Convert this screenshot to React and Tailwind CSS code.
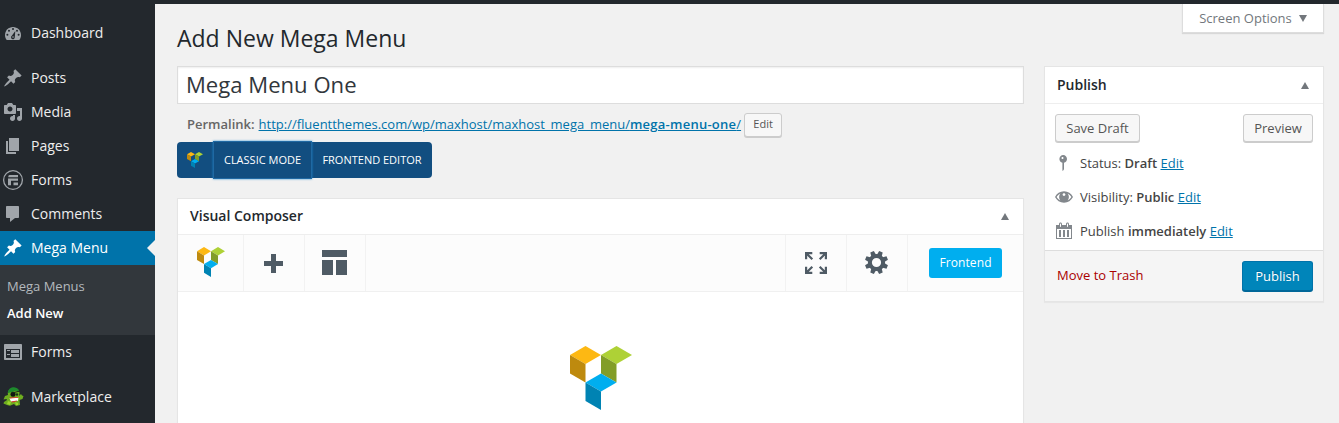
import React from "react";

const paths = {
  pin: "M10.44 3.02l1.82-1.82 6.36 6.35-1.83 1.82c-1.05-.68-2.48-.57-3.41.36l-.75.75c-.92.93-1.04 2.35-.35 3.41l-1.83 1.82-2.41-2.41-2.8 2.79c-.42.42-3.38 2.71-3.8 2.29s1.86-3.39 2.28-3.81l2.79-2.79L4.1 9.36l1.83-1.82c1.05.69 2.48.57 3.4-.36l.75-.75c.93-.92 1.05-2.35.36-3.41z",
  media: "M13 11V4c0-.55-.45-1-1-1h-1.67L9 1H5L3.67 3H2c-.55 0-1 .45-1 1v7c0 .55.45 1 1 1h10c.55 0 1-.45 1-1zM7 4.5c1.38 0 2.5 1.12 2.5 2.5S8.38 9.5 7 9.5 4.5 8.38 4.5 7 5.62 4.5 7 4.5zM14 6h5v10.5c0 1.38-1.12 2.5-2.5 2.5S14 17.88 14 16.5s1.12-2.5 2.5-2.5c.17 0 .34.02.5.05V9h-3V6zm-4 8.05V13h2v3.5c0 1.38-1.12 2.5-2.5 2.5S7 17.88 7 16.5 8.12 14 9.5 14c.17 0 .34.02.5.05z",
  page: "M6 15V2h10v13H6zm-1 1h8v2H3V5h2v11z",
  comment: "M4 2h11c.55 0 1 .45 1 1v10c0 .55-.45 1-1 1h-3l-5 4v-4H4c-.55 0-1-.45-1-1V3c0-.55.45-1 1-1z",
  form: "M2 2h16c.55 0 1 .45 1 1v14c0 .55-.45 1-1 1H2c-.55 0-1-.45-1-1V3c0-.55.45-1 1-1zm15 14V7H3v9h14zM4 8v1h3V8H4zm4 0v3h8V8H8zm-4 4v1h3v-1H4zm4 0v3h8v-3H8z",
  status: "M13 6c0 1.860-1.280 3.410-3 3.860V16c0 1-1.600 2-1.600 2V9.860c-1.720-.45-3-2-3-3.860 0-2.210 1.700-4 3.800-4s3.800 1.790 3.800 4zM7.500 5c0 .55.45 1 1 1s1-.45 1-1-.45-1-1-1-1 .45-1 1z",
  eye: "M10 4.300c4 0 7.200 2.200 9 5.700-1.800 3.500-5 5.700-9 5.700S2.800 13.500 1 10c1.800-3.500 5-5.700 9-5.700zM6.300 6.500C4.800 7.300 3.500 8.500 2.600 10c.9 1.500 2.200 2.700 3.700 3.500C5.500 12.500 5.100 11.300 5.100 10s.4-2.500 1.200-3.500zm7.400 0c.8 1 1.200 2.200 1.200 3.500s-.4 2.500-1.200 3.500c1.500-.8 2.800-2 3.700-3.500-.9-1.500-2.200-2.700-3.700-3.500zM10 6.200c-.8 0-1.400.6-1.400 1.400S9.200 9 10 9s1.400-.6 1.400-1.400S10.800 6.200 10 6.200z",
  calendar: "M15 4h3v14H2V4h3V3c0-.83.67-1.5 1.5-1.5S8 2.17 8 3v1h4V3c0-.83.67-1.5 1.5-1.5S15 2.17 15 3v1zM6 3v2.5c0 .28.22.5.5.5s.5-.22.5-.5V3c0-.28-.22-.5-.5-.5S6 2.72 6 3zm7 0v2.5c0 .28.22.5.5.5s.5-.22.5-.5V3c0-.28-.22-.5-.5-.5s-.5.22-.5.5zm4 14V8H3v9h14zM7 16V9H5v7h2zm4 0V9H9v7h2zm4 0V9h-2v7h2z",
};

const Icon = ({ name, className = "text-[#a0a5aa]" }) => (
  <svg viewBox="0 0 20 20" className={"size-5 shrink-0 " + className} fill="currentColor" fillRule="evenodd">
    <path d={paths[name]} />
  </svg>
);

const DashboardIcon = () => (
  <svg viewBox="0 0 20 20" className="size-5 shrink-0 text-[#a0a5aa]" fill="currentColor">
    <path d="M3.76 17h12.48c1.1-1.38 1.76-3.11 1.76-5 0-4.42-3.58-8-8-8s-8 3.58-8 8c0 1.89.66 3.62 1.76 5z" />
    <g fill="#23282d">
      <circle cx="10" cy="6" r="1" />
      <circle cx="6" cy="7.7" r="1" />
      <circle cx="14" cy="7.7" r="1" />
      <circle cx="4.4" cy="11.7" r="1" />
      <circle cx="15.6" cy="11.7" r="1" />
      <path d="M12.3 8L11.8 14a1.9 1.9 0 1 1-3-1.2z" />
    </g>
    <circle cx="10" cy="14" r=".8" />
  </svg>
);

const GravityIcon = () => (
  <svg viewBox="0 0 20 20" className="size-5 shrink-0 overflow-visible text-[#a0a5aa]">
    <circle cx="10" cy="10" r="9.4" fill="none" stroke="currentColor" strokeWidth="1.3" />
    <path fill="currentColor" d="M6.500 5H15v2.200H5.300C5.300 5.800 5.800 5 6.500 5zM5 8.600h10v2.200H8v4.500H5zM10.500 12.500H15v2.800h-4.500z" />
  </svg>
);

const MonsterIcon = () => (
  <svg viewBox="0 0 21 20" className="h-5 w-[21px] shrink-0">
    <path fill="#6fae20" d="M5 8C4 3.500 7 1.500 11 1.500s6 2 5.400 5.500L16 9l2-2 1 1.500 1.500.5-1 3-3 1 .5 5-4 1-2-2-4 1.800-3-.8-3.500-1.500L1 15l3-2-.5-1-3 .5L2 9z" />
    <path fill="#1d8a2c" d="M5 6C5 2 8 .3 11 .3c3 .2 4.500 1.700 5.500 4L13 3.800 9 5z" />
    <path fill="#9bd42b" d="M5 14l3 1-1 3-3-1zM12 15l3 1v2h-2z" />
    <circle cx="10" cy="7.300" r="2.500" fill="#101510" />
    <path d="M9 6l8-2" stroke="#18251a" />
    <circle cx="14" cy="7.500" r="1.200" fill="#18351a" />
    <path fill="#fff" d="M6.500 11.300l9-.8-.5 3.300-7 1z" />
    <path fill="#d6372c" d="M6.500 10.600l9-.7v.8l-8.500.9zM8 14.400l6-.8-.5 1-4.500.8z" />
  </svg>
);

const CubeLogo = ({ className }) => (
  <svg viewBox="0 0 62 64" className={className} preserveAspectRatio="none">
    <path fill="#fdb813" d="M0 9L15.500 0 31 9 15.500 18z" />
    <path fill="#be8a0e" d="M0 9l15.500 9v18.500L0 27.500z" />
    <path fill="#aed136" d="M31 9L46.500 0 62 9 46.500 18z" />
    <path fill="#829d28" d="M31 9l15.500 9v18.500L31 27.500z" />
    <path fill="#00aeef" d="M15.500 36.500L31 27.500l15.500 9L31 45.500z" />
    <path fill="#0083b3" d="M15.500 36.500L31 45.500V64l-15.500-9z" />
  </svg>
);

const NavItem = ({ icon, label, active }) => (
  <li className={"relative flex h-[34px] items-center gap-2 pl-[3px] text-sm " + (active ? "bg-[#0073aa] text-white" : "text-[#eee]")}>
    {icon}
    <span>{label}</span>
    {active && (
      <svg viewBox="0 0 8 16" className="absolute right-0 top-[9px] h-4 w-2">
        <path d="M8 0v16L0 8z" fill="#f1f1f1" />
      </svg>
    )}
  </li>
);

const Triangle = ({ down = false }) => (
  <svg viewBox="0 0 8 7" className="h-[7px] w-2 text-[#72777c]" fill="currentColor">
    <path d={down ? "M0 0h8L4 7z" : "M4 0l4 7H0z"} />
  </svg>
);

const Button = ({ children, className }) => (
  <button className={"flex items-center justify-center rounded-[3px] border border-[#ccc] bg-[#f7f7f7] text-[#555] shadow-[0_1px_0_#ccc] " + className}>
    {children}
  </button>
);

const EditLink = () => <a className="text-[#0073aa] underline">Edit</a>;

const StatusRow = ({ icon, label, value }) => (
  <div className="flex h-[34px] shrink-0 items-center gap-[6px] pl-[9px]">
    <Icon name={icon} className="mb-0.5 text-[#82878c]" />
    <span>
      {label} <b className="font-semibold">{value}</b> <EditLink />
    </span>
  </div>
);

const Sidebar = () => (
  <nav className="w-[155px] shrink-0 bg-[#23282d] pt-3">
    <ul className="flex flex-col">
      <NavItem icon={<DashboardIcon />} label="Dashboard" />
      <li className="h-[11px]" />
      <NavItem icon={<Icon name="pin" />} label="Posts" />
      <NavItem icon={<Icon name="media" />} label="Media" />
      <NavItem icon={<Icon name="page" />} label="Pages" />
      <NavItem icon={<GravityIcon />} label="Forms" />
      <NavItem icon={<Icon name="comment" />} label="Comments" />
      <NavItem active icon={<Icon name="pin" className="text-white" />} label="Mega Menu" />
      <li className="flex h-[70px] flex-col bg-[#32373c] pl-[7px] pt-2 text-[13px] leading-[27px]">
        <span className="text-[#b4b9be]">Mega Menus</span>
        <span className="font-semibold text-white">Add New</span>
      </li>
      <NavItem icon={<Icon name="form" />} label="Forms" />
      <li className="h-[11px]" />
      <NavItem icon={<MonsterIcon />} label={<span className="-ml-px">Marketplace</span>} />
    </ul>
  </nav>
);

const Editor = () => (
  <main className="flex w-[847px] shrink-0 flex-col">
    <h1 className="mt-[18px] h-8 shrink-0 text-[23px] leading-8 text-[#23282d]">Add New Mega Menu</h1>
    <div className="mt-3 flex h-[38px] shrink-0 items-center border border-[#ddd] bg-white pb-px pl-2 text-[22.1px] leading-none text-[#32373c] shadow-[inset_0_1px_2px_rgba(0,0,0,0.07)]">
      Mega Menu One
    </div>
    <div className="mt-2 flex h-[25px] shrink-0 items-center pl-[10px] text-[13px] text-[#666]">
      <b className="font-semibold">Permalink:</b>
      <a className="ml-1 text-[#0073aa] underline">
        http://fluentthemes.com/wp/maxhost/maxhost_mega_menu/<b className="font-semibold tracking-[0.25px]">mega-menu-one</b>/
      </a>
      <Button className="ml-[3px] h-6 w-[38px] text-[11px]">Edit</Button>
    </div>
    <div className="mt-[5px] flex h-9 w-[255px] shrink-0 items-stretch rounded-[4px] bg-[#124e80] text-[11px] text-white">
      <div className="flex w-9 items-center justify-center pr-px">
        <CubeLogo className="h-4 w-[16px]" />
      </div>
      <button className="-my-px w-[99px] whitespace-nowrap bg-[#124e80] shadow-[inset_0_0_0_1px_#2069a3,0_0_2px_0_rgba(30,140,210,0.9)]">CLASSIC MODE</button>
      <button className="w-[120px] whitespace-nowrap">FRONTEND EDITOR</button>
    </div>
    <section className="mt-5 flex h-[240px] shrink-0 flex-col border border-[#e5e5e5] bg-white shadow-[0_1px_1px_rgba(0,0,0,0.04)]">
      <div className="flex h-9 shrink-0 items-center justify-between border-b border-[#eee] pb-px pl-3 pr-[14px]">
        <h2 className="text-sm font-semibold text-[#23282d]">Visual Composer</h2>
        <Triangle />
      </div>
      <div className="flex h-[57px] shrink-0 border-b border-[#f0f0f0] bg-[#fcfcfc]">
        <div className="flex w-[66px] items-center justify-center border-r border-[#f2f2f2] pb-[2px]">
          <CubeLogo className="h-[30px] w-7" />
        </div>
        <div className="flex w-[61px] items-center justify-center border-r border-[#f2f2f2] pr-px">
          <svg viewBox="0 0 19 19" className="size-[19px]" fill="#4f5b65"><path d="M7 0h5v7h7v5h-7v7H7v-7H0V7h7z" /></svg>
        </div>
        <div className="flex w-[61px] items-center justify-center border-r border-[#f2f2f2] pb-px pr-px">
          <svg viewBox="0 0 25 25" className="size-[25px]" fill="#4f5b65"><path d="M0 0h25v7H0zM0 10h11v15H0zM14 10h11v15H14z" /></svg>
        </div>
        <div className="ml-auto flex w-[62px] items-center justify-center border-x border-[#f2f2f2]">
          <svg viewBox="0 0 22 22" className="size-[22px]" fill="none" stroke="#4f5b65" strokeWidth="2.200">
            <path d="M7.300 1.100H1.100v6.200M1.500 1.500L7.300 7.300" />
            <path d="M14.700 1.100h6.200v6.200M20.500 1.500L14.700 7.300" />
            <path d="M7.300 20.900H1.100v-6.200M1.500 20.500L7.300 14.700" />
            <path d="M14.700 20.900h6.200v-6.200M20.500 20.500L14.700 14.700" />
          </svg>
        </div>
        <div className="flex w-[61px] items-center justify-center border-r border-[#f2f2f2] pb-px pr-px">
          <svg viewBox="-11.500 -11.500 23 23" className="size-[23px]" fill="#4f5b65">
            {[22.5, 67.5, 112.5, 157.5, 202.5, 247.5, 292.5, 337.5].map((a) => (
              <path key={a} transform={`rotate(${a})`} d="M-2.600 -7L-1.900 -11.600H1.900L2.600 -7z" />
            ))}
            <circle r="6.600" fill="none" stroke="#4f5b65" strokeWidth="4" />
          </svg>
        </div>
        <div className="flex w-[115px] items-center pl-[21px]">
          <button className="h-[30px] w-[73px] rounded-[3px] bg-[#00aeef] text-[12px] tracking-[0.1px] text-white">Frontend</button>
        </div>
      </div>
      <div className="flex justify-center pt-[54px]">
        <CubeLogo className="h-16 w-[62px] shrink-0" />
      </div>
    </section>
  </main>
);

const PublishPanel = () => (
  <aside className="flex w-[280px] shrink-0 flex-col">
    <div className="flex h-[29px] w-[142px] items-center justify-center gap-[7px] self-end border border-t-0 border-[#ddd] bg-white pt-px text-[13px] text-[#72777c] shadow-[0_1px_1px_rgba(0,0,0,0.1)]">
      Screen Options <Triangle down />
    </div>
    <section className="mt-[33px] flex h-[236px] flex-col border border-[#e5e5e5] bg-white text-[13px] text-[#444] shadow-[0_1px_1px_rgba(0,0,0,0.04)]">
      <div className="flex h-[37px] shrink-0 items-center justify-between border-b border-[#eee] pl-3 pr-[14px]">
        <h2 className="text-sm font-semibold text-[#23282d]">Publish</h2>
        <Triangle />
      </div>
      <div className="flex h-[43px] shrink-0 items-end justify-between px-[10px] pb-[5px]">
        <Button className="h-7 w-[85px] pt-px">Save Draft</Button>
        <Button className="h-7 w-[70px] pt-px">Preview</Button>
      </div>
      <StatusRow icon="status" label="Status:" value="Draft" />
      <StatusRow icon="eye" label="Visibility:" value="Public" />
      <StatusRow icon="calendar" label="Publish" value="immediately" />
      <div className="mt-auto flex h-[51px] shrink-0 items-center justify-between border-t border-[#ddd] bg-[#f5f5f5] pb-px pl-3 pr-[10px]">
        <a className="text-[#a00]">Move to Trash</a>
        <button className="h-[30px] w-[71px] rounded-[3px] border border-[#0073aa] border-b-[#006799] bg-[#0085ba] pt-0.5 text-[13px] text-white shadow-[0_1px_0_#006799] [text-shadow:0_-1px_1px_#006799]">Publish</button>
      </div>
    </section>
  </aside>
);

export default function App() {
  return (
    <div className="flex h-[423px] w-[1339px] flex-col overflow-hidden bg-[#f1f1f1] font-['Open_Sans',sans-serif]">
      <header className="h-1 shrink-0 bg-[#23282d]" />
      <div className="flex min-h-0 flex-1">
        <Sidebar />
        <div className="flex gap-5 pl-[22px]">
          <Editor />
          <PublishPanel />
        </div>
      </div>
    </div>
  );
}
